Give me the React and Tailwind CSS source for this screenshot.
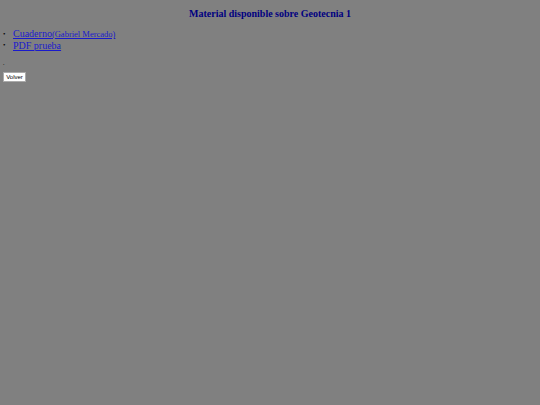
export default function App() {
  const items = [
    { label: "Cuaderno", note: "(Gabriel Mercado)" },
    { label: "PDF prueba", note: null },
  ];

  return (
    <div className="min-h-[405px] w-full bg-[#808080] font-['Liberation_Serif',serif]">
      <h3 className="pt-[8px] text-center text-[10px] font-bold leading-[12px] text-[#000080]">
        Material disponible sobre Geotecnia 1
      </h3>

      <ul className="mt-[8px] flex flex-col">
        {items.map((item) => (
          <li key={item.label} className="flex items-center leading-[11px]">
            <span className="w-[13px] pl-[3px] text-[7px] text-black">•</span>
            <a href="#" className="text-[10px] text-[#1a1acc] underline">
              {item.label}
              {item.note && <span className="text-[8.5px]">{item.note}</span>}
            </a>
          </li>
        ))}
      </ul>

      <p className="mt-[9px] pl-[3px] text-[6px] leading-[6px] text-black">.</p>

      <div className="mt-[6px] flex pl-[3px]">
        <button className="flex h-[10px] w-[23px] items-center justify-center border border-[#aaa] bg-white font-['Liberation_Sans',sans-serif] text-[6px] leading-[7px] text-black">
          Volver
        </button>
      </div>
    </div>
  );
}
